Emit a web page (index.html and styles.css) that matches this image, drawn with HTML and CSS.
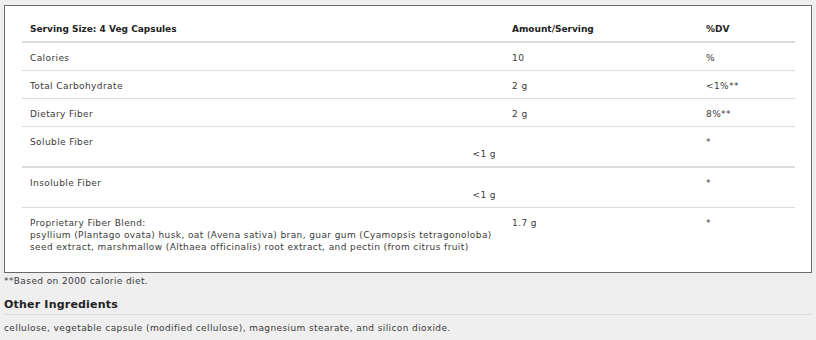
FILE: index.html
```html
<!DOCTYPE html>
<html>
<head>
<meta charset="utf-8">
<link rel="stylesheet" href="styles.css">
</head>
<body>
<div class="panel">
  <table class="facts">
    <colgroup><col class="c1"><col class="c2"><col class="c3"></colgroup>
    <thead>
      <tr><th>Serving Size: 4 Veg Capsules</th><th>Amount/Serving</th><th>%DV</th></tr>
    </thead>
    <tbody>
      <tr><td>Calories</td><td>10</td><td>%</td></tr>
      <tr><td>Total Carbohydrate</td><td>2 g</td><td>&lt;1%**</td></tr>
      <tr><td>Dietary Fiber</td><td>2 g</td><td>8%**</td></tr>
      <tr class="thick"><td><div>Soluble Fiber</div><div class="sub">&lt;1 g</div></td><td></td><td>*</td></tr>
      <tr><td><div>Insoluble Fiber</div><div class="sub">&lt;1 g</div></td><td></td><td>*</td></tr>
      <tr class="last"><td><div>Proprietary Fiber Blend:</div><div>psyllium (Plantago ovata) husk, oat (Avena sativa) bran, guar gum (Cyamopsis tetragonoloba)<br>seed extract, marshmallow (Althaea officinalis) root extract, and pectin (from citrus fruit)</div></td><td>1.7 g</td><td>*</td></tr>
    </tbody>
  </table>
</div>
<p class="note">**Based on 2000 calorie diet.</p>
<h2 class="other">Other Ingredients</h2>
<p class="ingredients">cellulose, vegetable capsule (modified cellulose), magnesium stearate, and silicon dioxide.</p>
</body>
</html>
```
FILE: styles.css
```css
html, body {
  margin: 0;
  padding: 0;
  background: #efefef;
  font-family: "DejaVu Sans", Verdana, sans-serif;
  font-size: 9px;
  letter-spacing: 0.4px;
  color: #3a3a3a;
}
body {
  padding: 5px 4px 0;
}
.panel {
  background: #fff;
  border: 1px solid #6a6a6a;
  padding: 8px 16px 13px 17px;
}
.facts {
  width: 773px;
  border-collapse: collapse;
  table-layout: fixed;
}
.c1 { width: 482px; }
.c2 { width: 194px; }
.c3 { width: 97px; }
.facts th, .facts td {
  text-align: left;
  vertical-align: top;
  padding: 9px 8px 6px;
  line-height: 12px;
  border-bottom: 1px solid #dcdcdc;
}
.facts th {
  font-weight: bold;
  letter-spacing: 0;
  color: #222;
  border-bottom: 2px solid #dcdcdc;
}
.facts tr.thick td {
  border-bottom: 2px solid #dcdcdc;
}
.facts tr.last td {
  border-bottom: none;
}
.sub {
  text-align: right;
}
.note {
  margin: 2px 0 0;
  line-height: 12px;
}
.other {
  margin: 11px 0 0;
  font-size: 11px;
  font-weight: bold;
  letter-spacing: 0.2px;
  color: #222;
  line-height: 14px;
  padding-bottom: 2px;
  border-bottom: 1px solid #dedede;
}
.ingredients {
  margin: 7px 0 0;
  line-height: 12px;
}
```
